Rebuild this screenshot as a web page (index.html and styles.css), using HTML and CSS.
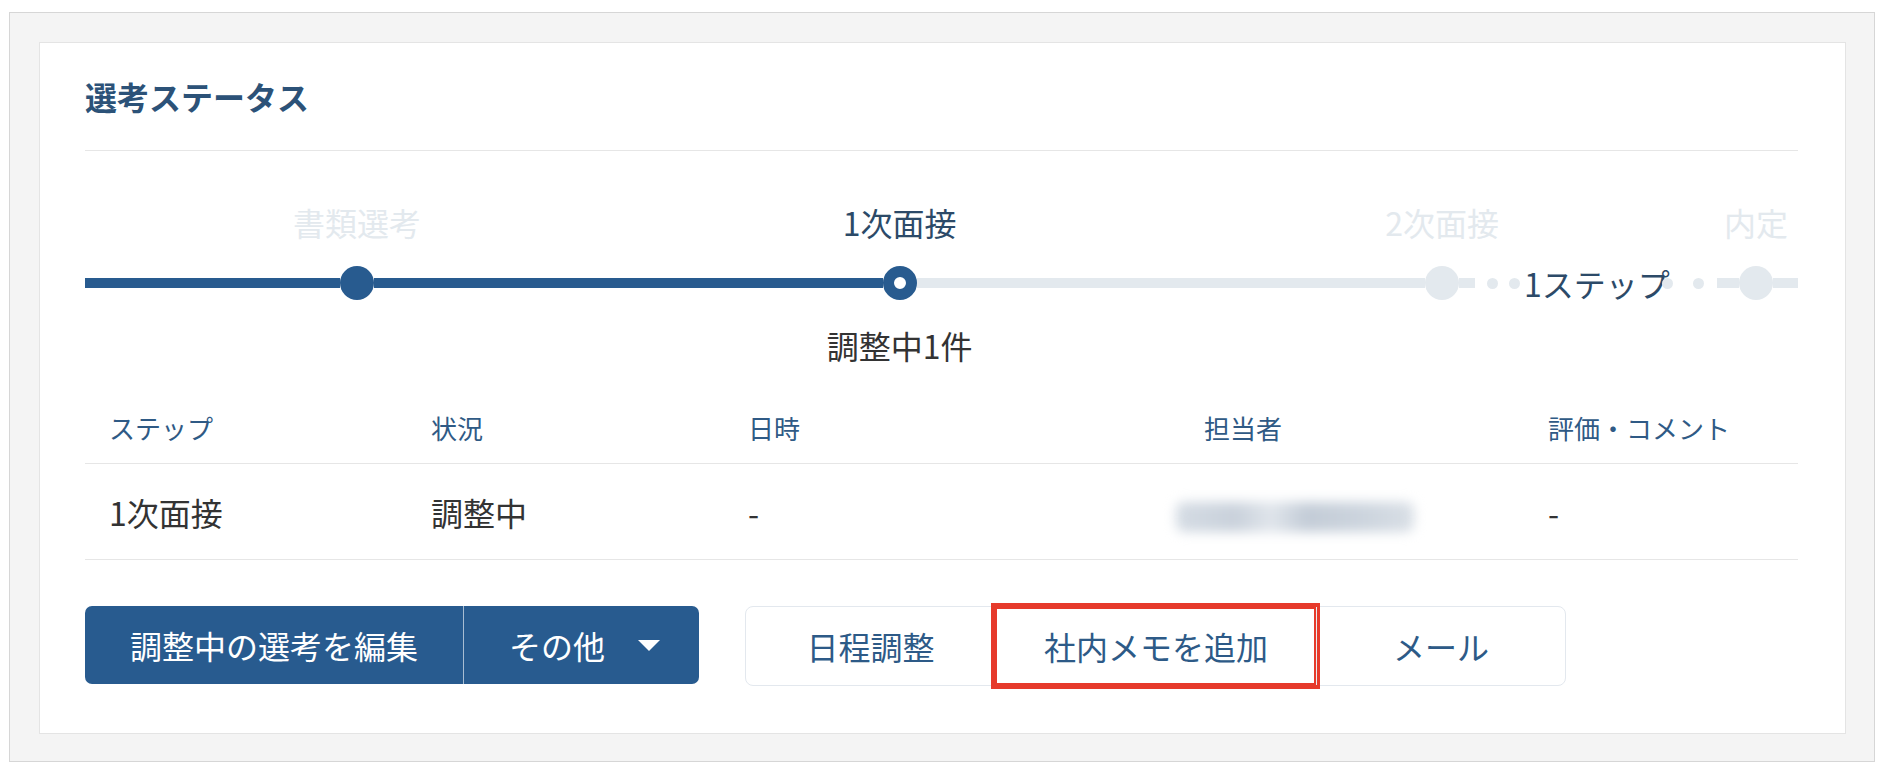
FILE: index.html
```html
<!DOCTYPE html>
<html>
<head>
  <meta charset="utf-8">
  <title>選考ステータス</title>
  <link rel="stylesheet" href="styles.css">
</head>
<body>
  <div class="frame">
    <section class="card">
      <h2 class="card-title">選考ステータス</h2>

      <div class="stepper">
        <div class="line done lead"></div>
        <div class="node">
          <span class="label">書類選考</span>
          <span class="dot done"></span>
        </div>
        <div class="line done"></div>
        <div class="node">
          <span class="label current">1次面接</span>
          <span class="dot current"></span>
          <span class="note">調整中1件</span>
        </div>
        <div class="line"></div>
        <div class="node">
          <span class="label">2次面接</span>
          <span class="dot"></span>
        </div>
        <div class="line stub"></div>
        <div class="skip">
          <span class="pip"></span>
          <span class="pip"></span>
          <span class="skip-text">1ステップ</span>
          <span class="pip"></span>
          <span class="pip"></span>
        </div>
        <div class="line stub-after"></div>
        <div class="node">
          <span class="label">内定</span>
          <span class="dot"></span>
        </div>
        <div class="line tail"></div>
      </div>

      <table class="steps">
        <colgroup>
          <col style="width: 322px">
          <col style="width: 317px">
          <col style="width: 456px">
          <col style="width: 344px">
          <col>
        </colgroup>
        <thead>
          <tr>
            <th>ステップ</th>
            <th>状況</th>
            <th>日時</th>
            <th>担当者</th>
            <th>評価・コメント</th>
          </tr>
        </thead>
        <tbody>
          <tr>
            <td>1次面接</td>
            <td>調整中</td>
            <td>-</td>
            <td><span class="blurred"></span></td>
            <td>-</td>
          </tr>
        </tbody>
      </table>

      <div class="actions">
        <div class="btn-group primary">
          <button type="button">調整中の選考を編集</button>
          <button type="button" class="more">その他 <span class="caret"></span></button>
        </div>
        <div class="btn-group secondary">
          <button type="button">日程調整</button>
          <button type="button" class="marked">社内メモを追加</button>
          <button type="button">メール</button>
        </div>
      </div>
    </section>
  </div>
</body>
</html>
```

FILE: styles.css
```css
body {
  margin: 0;
  padding: 12px 17px 13px 9px;
  background-color: #fff;
  font-family: "Noto Sans CJK JP", "Noto Sans", sans-serif;
  color: #333;
}

.frame {
  background-color: #f4f4f4;
  border: 1px solid #d6d6d6;
  padding: 29px 28px 27px 29px;
}

.card {
  background-color: #fff;
  border: 1px solid #e4e4e4;
  padding: 33px 47px 47px 45px;
}

.card-title {
  margin: 0;
  padding-bottom: 34px;
  border-bottom: 1px solid #e6e6e6;
  font-size: 32px;
  line-height: 40px;
  font-weight: bold;
  color: #2c5278;
}

/* progress steps */
.stepper {
  display: flex;
  align-items: flex-start;
  margin-top: 51px;
  height: 163px;
}

.line {
  flex: 1 1 509px;
  height: 10px;
  margin-top: 76px;
  background-color: #e3e9ee;
}

.line.lead {
  flex: 0 0 255px;
}

.line.done {
  background-color: #285b8f;
}

.line.stub {
  flex: 0 0 16px;
}

.line.stub-after {
  flex: 0 0 22px;
}

.line.tail {
  flex: 0 0 25px;
}

.node {
  flex: 0 0 34px;
  display: flex;
  flex-direction: column;
  align-items: center;
}

.label,
.note {
  display: flex;
  justify-content: center;
  width: 34px;
  white-space: nowrap;
  font-size: 32px;
  line-height: 40px;
  color: #e3e9ee;
}

.label {
  margin-bottom: 24px;
}

.label.current {
  color: #2c4a68;
}

.note {
  margin-top: 25px;
  color: #333;
}

.dot {
  box-sizing: border-box;
  width: 34px;
  height: 34px;
  border-radius: 50%;
  background-color: #e3e9ee;
}

.dot.done {
  background-color: #285b8f;
}

.dot.current {
  background-color: #fff;
  border: 11px solid #285b8f;
}

.skip {
  flex: 0 0 242px;
  box-sizing: border-box;
  display: flex;
  align-items: center;
  height: 40px;
  margin-top: 61px;
  padding-left: 12px;
}

.pip {
  flex: 0 0 11px;
  height: 11px;
  border-radius: 50%;
  background-color: #e3e9ee;
  margin-right: 11px;
}

.pip:nth-child(2) {
  margin-right: 4px;
}

.pip:nth-child(4) {
  margin-left: -8px;
}

.pip:last-child {
  margin-right: 0;
  margin-left: 9px;
}

.skip-text {
  flex: 0 0 auto;
  white-space: nowrap;
  font-size: 32px;
  line-height: 40px;
  color: #2c4a68;
}

/* table */
.steps {
  width: 100%;
  margin-top: 43px;
  border-collapse: collapse;
  table-layout: fixed;
}

.steps th {
  padding: 0 0 15px 24px;
  text-align: left;
  font-size: 26px;
  line-height: 40px;
  font-weight: normal;
  color: #2f5a85;
  border-bottom: 1px solid #e6e6e6;
}

.steps td {
  padding: 28px 0 27px 24px;
  font-size: 32px;
  line-height: 40px;
  color: #333;
  border-bottom: 1px solid #e6e6e6;
}

.blurred {
  display: inline-block;
  vertical-align: middle;
  width: 238px;
  height: 30px;
  margin-left: -28px;
  background: linear-gradient(90deg, #d5dce4 0%, #c9d1db 25%, #e0e5eb 40%, #c3ccd7 55%, #cdd5de 80%, #d9dfe6 100%);
  border-radius: 8px;
  filter: blur(6px);
}

/* buttons */
.actions {
  display: flex;
  gap: 46px;
  margin-top: 46px;
}

.btn-group {
  display: flex;
  height: 78px;
  border-radius: 7px;
}

.btn-group button {
  font-family: inherit;
  font-size: 32px;
  line-height: 40px;
  border: none;
  background: none;
  cursor: pointer;
}

.primary {
  background-color: #285b8f;
}

.primary button {
  color: #fff;
  padding: 0 45px;
}

.primary .more {
  display: flex;
  align-items: center;
  border-left: 1px solid #a8bdd2;
  padding: 0 39px 0 45px;
}

.caret {
  width: 0;
  height: 0;
  margin-left: 33px;
  border-left: 11px solid transparent;
  border-right: 11px solid transparent;
  border-top: 11px solid #fff;
}

.secondary {
  border: 1px solid #e3e8ee;
  border-radius: 8px;
}

.secondary button {
  min-width: 249px;
  padding: 0 48px;
  color: #2d5a87;
}

.secondary button + button {
  border-left: 1px solid #e8ecf0;
}

.secondary .marked {
  outline: 6px solid #e63a2b;
  outline-offset: -2px;
}
```
